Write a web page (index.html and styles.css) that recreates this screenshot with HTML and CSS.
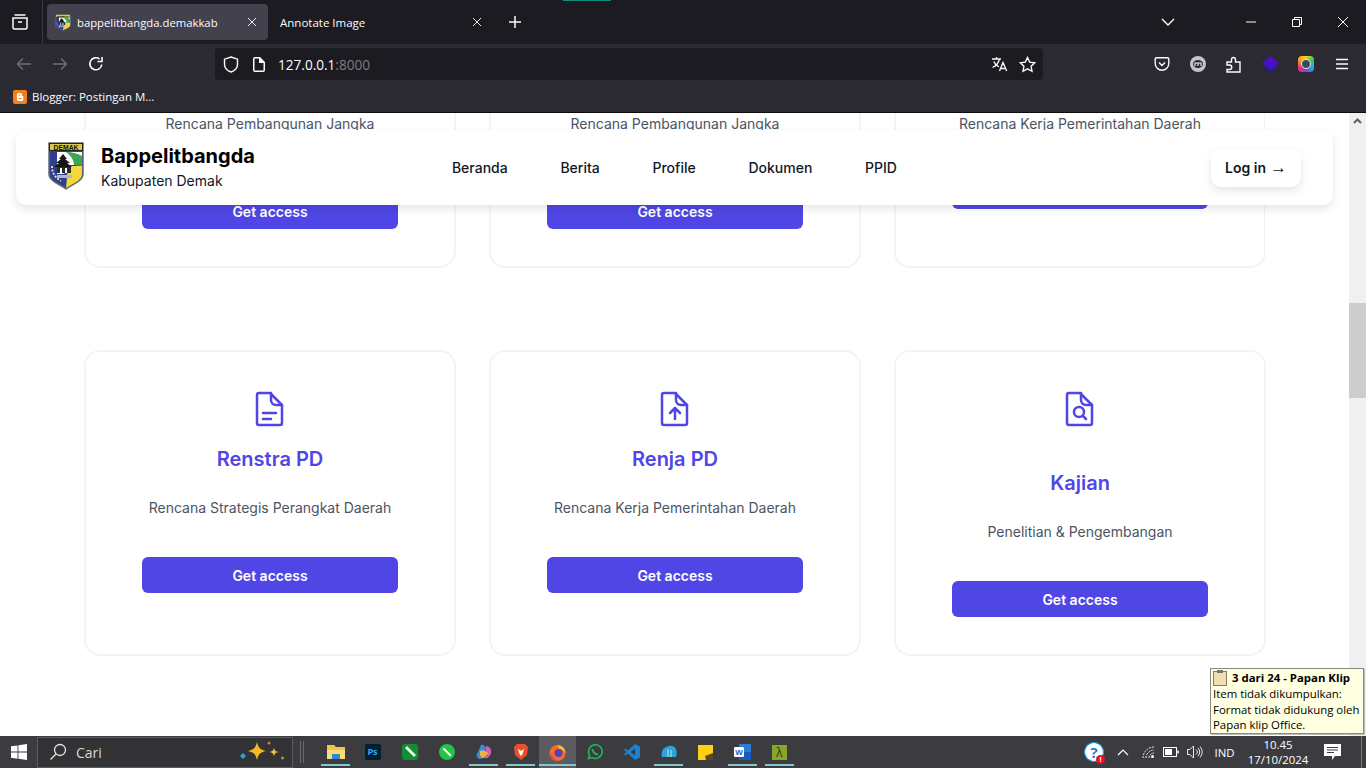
FILE: index.html
```html
<!DOCTYPE html>
<html lang="en">
<head>
    <meta charset="UTF-8">
    <meta name="viewport" content="width=device-width, initial-scale=1.0">
    <link rel="stylesheet" href="styles.css">
    <title>Bappelitbangda</title>
</head>
<body>
    <svg class="defs" width="0" height="0">
        <symbol id="shield" viewBox="0 0 36 48" preserveAspectRatio="none">
            <path d="M1 1h34v31c0 7-10 10-17 15C11 42 1 39 1 32z" fill="#2f3f8f" stroke="#6a6b72" stroke-width="1.500"/>
            <path d="M20 24h14v8c0 6-8 9-16 14z" fill="#f2d93a"/>
            <path d="M9 10h25v13H22c-1 6-4 8-7 9H9z" fill="#fff"/>
            <path d="M18 10c7 0 12 2 16 4v10c-3 0-5-1-8-1 0-5-3-9-8-13z" fill="#3aa651"/>
            <path d="M15 12l4 5h-2l5 4h-3l5 4H6l5-4H8l5-4h-2z" fill="#161616"/>
            <rect x="9" y="25" width="14" height="6" fill="#2a2a2a"/>
            <rect x="12" y="26" width="2" height="5" fill="#fff"/>
            <rect x="17" y="26" width="2" height="5" fill="#fff"/>
            <path d="M9 33h15v3H9z" fill="#b5b3d8"/>
            <path d="M4 24c0 6 2 11 9 15" fill="none" stroke="#dfe6c8" stroke-width="1.800" stroke-dasharray="2 1.500"/>
            <rect x="1.500" y="1.500" width="33" height="7" fill="#d9c84a" stroke="#222" stroke-width="1"/>
            <text x="18" y="7.600" text-anchor="middle" font-family="Liberation Sans" font-size="6.800" font-weight="700" fill="#111">DEMAK</text>
        </symbol>
    </svg>

    <div class="top-strip"></div>

    <div class="tabbar">
        <div class="tab-list-btn">
            <svg width="18" height="18" viewBox="0 0 18 18" fill="none" stroke="#fbfbfe" stroke-width="1.5"><path d="M3.500 2h11M2 5h14v9.500a1.500 1.500 0 0 1-1.500 1.500h-11A1.500 1.500 0 0 1 2 14.500zM7 9h4"/></svg>
        </div>
        <div class="tab tab-active">
            <svg class="favicon" width="16" height="17"><use href="#shield" width="16" height="17"/></svg>
            <span class="tab-title">bappelitbangda.demakkab</span>
            <svg class="tab-close" width="12" height="12" viewBox="0 0 12 12" stroke="#e8e8ea" stroke-width="1"><path d="M2 2l8 8M10 2l-8 8"/></svg>
        </div>
        <div class="tab">
            <span class="tab-title">Annotate Image</span>
            <svg class="tab-close" width="12" height="12" viewBox="0 0 12 12" stroke="#e8e8ea" stroke-width="1"><path d="M2 2l8 8M10 2l-8 8"/></svg>
        </div>
        <div class="new-tab">
            <svg width="14" height="14" viewBox="0 0 14 14" stroke="#fbfbfe" stroke-width="1.500"><path d="M7 1v12M1 7h12"/></svg>
        </div>
        <div class="tab-chevron">
            <svg width="14" height="9" viewBox="0 0 14 9" fill="none" stroke="#fbfbfe" stroke-width="1.400"><path d="M1 1l6 6 6-6"/></svg>
        </div>
        <div class="win-btn"><svg width="12" height="2" viewBox="0 0 12 2" stroke="#fff"><path d="M1 1h10"/></svg></div>
        <div class="win-btn"><svg width="12" height="12" viewBox="0 0 12 12" fill="none" stroke="#fff"><path d="M1.500 3.500h7v7h-7zM3.500 3.500v-2h7v7h-2"/></svg></div>
        <div class="win-btn"><svg width="12" height="12" viewBox="0 0 12 12" stroke="#fff"><path d="M1 1l10 10M11 1L1 11"/></svg></div>
    </div>

    <div class="toolbar">
        <div class="tool-btn"><svg width="16" height="14" viewBox="0 0 16 14" fill="none" stroke="#6f6e75" stroke-width="1.500"><path d="M15 7H1.500M7 1.500L1.500 7 7 12.500"/></svg></div>
        <div class="tool-btn"><svg width="16" height="14" viewBox="0 0 16 14" fill="none" stroke="#6f6e75" stroke-width="1.500"><path d="M1 7h13.500M9 1.500L14.500 7 9 12.500"/></svg></div>
        <div class="tool-btn"><svg width="16" height="16" viewBox="0 0 16 16" fill="none" stroke="#fbfbfe" stroke-width="1.600"><path d="M13.800 8.500A6 6 0 1 1 11.500 3M14 1v4.500H9.500"/></svg></div>
        <div class="urlbar">
            <svg class="url-shield" width="16" height="17" viewBox="0 0 16 17" fill="none" stroke="#fbfbfe" stroke-width="1.400"><path d="M8 1l6.500 2.200v5c0 4-3 6.600-6.500 7.800-3.500-1.200-6.500-3.800-6.500-7.800v-5z"/></svg>
            <svg class="url-page" width="12" height="15" viewBox="0 0 12 15" fill="#fbfbfe"><path d="M2 0h5l5 5v8a2 2 0 0 1-2 2H2a2 2 0 0 1-2-2V2a2 2 0 0 1 2-2zm0 1.500a.5.5 0 0 0-.5.5v11a.5.5 0 0 0 .5.5h8a.5.5 0 0 0 .5-.5V6H6V1.500z"/></svg>
            <span class="url-text">127.0.0.1<span class="url-port">:8000</span></span>
            <svg class="url-translate" width="17" height="16" viewBox="0 0 17 16" fill="none" stroke="#fbfbfe" stroke-width="1.300"><path d="M1 3h9M5.500 1v2M8.500 3C7.500 7 5 10 1.500 11.500M2.800 5.500c1 2.500 3 4.500 5.200 5.500M8.500 15l3.500-8.500L15.700 15M9.700 12.500h4.800"/></svg>
            <svg class="url-star" width="17" height="17" viewBox="0 0 17 17" fill="none" stroke="#fbfbfe" stroke-width="1.400"><path d="M8.500 1.500l2.200 4.600 5 .7-3.600 3.500.9 5-4.500-2.400L4 15.300l.9-5L1.300 6.800l5-.7z"/></svg>
        </div>
        <div class="tool-btn tool-first"><svg width="16" height="16" viewBox="0 0 16 16" fill="none" stroke="#fbfbfe" stroke-width="1.400"><path d="M2.500 1.700h11a1.300 1.300 0 0 1 1.300 1.300v4.500a6.800 6.800 0 0 1-13.600 0V3a1.300 1.300 0 0 1 1.300-1.300zM5 6.500l3 3 3-3"/></svg></div>
        <div class="tool-btn"><svg width="16" height="16" viewBox="0 0 16 16"><circle cx="8" cy="8" r="8" fill="#c4c4c6"/><ellipse cx="8" cy="8" rx="5" ry="4" fill="#2a2a2e"/><path d="M5 10V7h6v3M8 7v3" fill="none" stroke="#eee" stroke-width="1.200"/></svg></div>
        <div class="tool-btn"><svg width="16" height="17" viewBox="0 0 16 17" fill="none" stroke="#fbfbfe" stroke-width="1.400"><path d="M1 9V6h4.500V3.500a2 2 0 0 1 4 0V6H14v10H1v-2.500h2.500a2 2 0 0 0 0-4.500z"/></svg></div>
        <div class="tool-btn"><svg width="17" height="17" viewBox="0 0 17 17"><path d="M0 9.500L8.500 17 17 9.500l-8.500-4z" fill="#2e1a8a"/><path d="M0 7l8.500-7L17 7l-8.500 6z" fill="#4a10c4"/></svg></div>
        <div class="tool-btn"><div class="color-ring"><div class="color-eye"></div></div></div>
        <div class="tool-btn"><svg width="14" height="12" viewBox="0 0 14 12" stroke="#fbfbfe" stroke-width="1.400"><path d="M1 1.500h12M1 6h12M1 10.500h12"/></svg></div>
    </div>

    <div class="bookmarks">
        <svg width="14" height="14" viewBox="0 0 14 14"><rect width="14" height="14" rx="2" fill="#f48120"/><path d="M4 4.500A1.500 1.500 0 0 1 5.500 3h2A1.500 1.500 0 0 1 9 4.500V6h.5a.8.8 0 0 1 .8.8v2.700A1.500 1.500 0 0 1 8.800 11H5.500A1.500 1.500 0 0 1 4 9.500z" fill="#fff"/><path d="M5.500 5H7.500M5.500 8.500h3.300" stroke="#f48120" stroke-width="1.100"/></svg>
        <span class="bookmark-name">Blogger: Postingan M...</span>
    </div>

    <div class="page">
        <main class="content">
            <div class="cards-clip">
                <div class="cards">
                    <div class="card">
                        <svg class="card-icon" width="30" height="36"></svg>
                        <h3 class="card-title">RPJPD</h3>
                        <p class="card-text">Rencana Pembangunan Jangka Panjang Daerah</p>
                        <a class="btn">Get access</a>
                    </div>
                    <div class="card">
                        <svg class="card-icon" width="30" height="36"></svg>
                        <h3 class="card-title">RPJMD</h3>
                        <p class="card-text">Rencana Pembangunan Jangka Menengah Daerah</p>
                        <a class="btn">Get access</a>
                    </div>
                    <div class="card">
                        <svg class="card-icon" width="30" height="36"></svg>
                        <h3 class="card-title">RKPD</h3>
                        <p class="card-text">Rencana Kerja Pemerintahan Daerah</p>
                        <a class="btn">Get access</a>
                    </div>
                </div>
            </div>

            <div class="cards cards-second">
                <div class="card">
                    <svg class="card-icon" width="30" height="36" viewBox="0 0 30 36" fill="none" stroke="#4f46e5" stroke-width="2.500" stroke-linecap="round" stroke-linejoin="round"><path d="M4 2h11l12 12v18a2 2 0 0 1-2 2H4a2 2 0 0 1-2-2V4a2 2 0 0 1 2-2z"/><path d="M16 2v7a5 5 0 0 0 5 5h6"/><path d="M8 22h13M8 28h8"/></svg>
                    <h3 class="card-title">Renstra PD</h3>
                    <p class="card-text">Rencana Strategis Perangkat Daerah</p>
                    <a class="btn">Get access</a>
                </div>
                <div class="card">
                    <svg class="card-icon" width="30" height="36" viewBox="0 0 30 36" fill="none" stroke="#4f46e5" stroke-width="2.500" stroke-linecap="round" stroke-linejoin="round"><path d="M4 2h11l12 12v18a2 2 0 0 1-2 2H4a2 2 0 0 1-2-2V4a2 2 0 0 1 2-2z"/><path d="M16 2v7a5 5 0 0 0 5 5h6"/><path d="M15 28V17M10 22l5-5 5 5"/></svg>
                    <h3 class="card-title">Renja PD</h3>
                    <p class="card-text">Rencana Kerja Pemerintahan Daerah</p>
                    <a class="btn">Get access</a>
                </div>
                <div class="card">
                    <svg class="card-icon" width="30" height="36" viewBox="0 0 30 36" fill="none" stroke="#4f46e5" stroke-width="2.500" stroke-linecap="round" stroke-linejoin="round"><path d="M4 2h11l12 12v18a2 2 0 0 1-2 2H4a2 2 0 0 1-2-2V4a2 2 0 0 1 2-2z"/><path d="M16 2v7a5 5 0 0 0 5 5h6"/><circle cx="14" cy="21" r="5"/><path d="M18 25l3 3"/></svg>
                    <h3 class="card-title card-title-low">Kajian</h3>
                    <p class="card-text">Penelitian &amp; Pengembangan</p>
                    <a class="btn">Get access</a>
                </div>
            </div>
        </main>

        <div class="scrollbar">
            <svg class="scroll-up" width="9" height="6" viewBox="0 0 9 6" fill="none" stroke="#5f5f5f" stroke-width="2"><path d="M1 5l3.500-3.500L8 5"/></svg>
            <div class="scroll-thumb"></div>
        </div>

        <header class="site-header">
            <div class="brand">
                <svg class="brand-logo" width="36" height="48"><use href="#shield" width="36" height="48"/></svg>
                <div>
                    <div class="brand-name">Bappelitbangda</div>
                    <div class="brand-sub">Kabupaten Demak</div>
                </div>
            </div>
            <nav class="nav">
                <a>Beranda</a>
                <a>Berita</a>
                <a>Profile</a>
                <a>Dokumen</a>
                <a>PPID</a>
            </nav>
            <a class="login">Log in <span class="login-arrow">→</span></a>
        </header>

        <div class="clip-tip">
            <div class="clip-head">
                <svg width="14" height="16" viewBox="0 0 14 16"><rect x=".5" y="1.500" width="13" height="14" fill="#f3deb4" stroke="#8a7a5a"/><rect x="4" y="0" width="6" height="3" fill="#777"/></svg>
                <b>3 dari 24 - Papan Klip</b>
            </div>
            <div>Item tidak dikumpulkan:</div>
            <div>Format tidak didukung oleh</div>
            <div>Papan klip Office.</div>
        </div>
    </div>

    <div class="taskbar">
        <div class="start">
            <svg width="16" height="16" viewBox="0 0 16 16" fill="#fff"><path d="M0 2.300l6.500-.9v6.200H0zM7.400 1.300L16 0v7.600H7.400zM0 8.500h6.500v6.200L0 13.700zM7.400 8.500H16V16l-8.600-1.200z"/></svg>
        </div>
        <div class="search">
            <svg width="18" height="18" viewBox="0 0 18 18" fill="none" stroke="#e8e8e8" stroke-width="1.300"><circle cx="11" cy="7" r="5.500"/><path d="M7 11l-5.500 5.500"/></svg>
            <span class="search-text">Cari</span>
            <svg class="sparkles" width="46" height="24" viewBox="0 0 46 24"><path d="M18 2c1.500 6 3 7.500 9 9-6 1.500-7.500 3-9 9-1.500-6-3-7.500-9-9 6-1.500 7.500-3 9-9z" fill="#f5b81f"/><path d="M35 7.500c.6 3 1.400 3.900 4.500 4.500-3.100.6-3.900 1.500-4.500 4.500-.6-3-1.400-3.900-4.500-4.500 3.100-.6 3.900-1.500 4.500-4.500z" fill="#f0c23a"/><path d="M4 13l3 3-3 3-3-3z" fill="#2fa3d8"/><circle cx="30" cy="3" r="1.500" fill="#d9793a"/><circle cx="43.500" cy="18" r="1.500" fill="#7fb23a"/></svg>
        </div>
        <div class="task-sep"></div>

        <div class="task-icon running"><svg width="18" height="16" viewBox="0 0 18 16"><path d="M0 1h7l2 2h9v12H0z" fill="#f4c542"/><rect y="6" width="18" height="9" fill="#f9dc7c"/><rect x="5" y="10" width="8" height="5" fill="#2e8bc9"/></svg></div>
        <div class="task-icon"><div class="ps-icon">Ps</div></div>
        <div class="task-icon"><svg width="16" height="16" viewBox="0 0 16 16"><rect width="16" height="16" rx="3" fill="#0f8f2f"/><path d="M3 4l9 9 2-2-9-9z" fill="#e6ffe6"/></svg></div>
        <div class="task-icon"><svg width="16" height="16" viewBox="0 0 16 16"><circle cx="8" cy="8" r="8" fill="#20c63f"/><path d="M3.500 5l7.500 7.500 1.600-1.600L5 3.500z" fill="#eaffea"/></svg></div>
        <div class="task-icon running"><svg width="16" height="16" viewBox="0 0 16 16"><path d="M5 1c3-1 4 1 5 4l-3 9c-2 2-5 1-6-1s0-3 1-5z" fill="#3d8be0"/><path d="M10 2c3 0 6 3 5 7s-4 6-7 5c3-2 3-5 2-8z" fill="#d85fc0"/><path d="M4 7c3-1 7 0 8 2l-4 5c-2 0-3-1-4-3z" fill="#f2b33d"/></svg></div>
        <div class="task-icon running"><svg width="14" height="16" viewBox="0 0 14 16"><path d="M3 0h8l3 3-1 8-6 5-6-5-1-8z" fill="#e8502a"/><path d="M4 5l3 2 3-2-1.500 5L7 12l-1.500-2z" fill="#fff"/></svg></div>
        <div class="task-icon task-active running"><svg width="17" height="17" viewBox="0 0 17 17"><circle cx="8.500" cy="9" r="8" fill="#f36d2b"/><path d="M8.500 1c5 1 8 4 8 8-2-3-4-4-6-4z" fill="#fbc02d"/><circle cx="9.500" cy="9" r="4" fill="#5a3fb8"/><path d="M1 10c1 4 4 7 8 7-3-1-5-3-6-6z" fill="#e63a66"/></svg></div>
        <div class="task-icon"><svg width="16" height="16" viewBox="0 0 16 16" fill="none" stroke="#25b45a" stroke-width="1.600"><path d="M1.500 14.500l1-3.500A6.800 6.800 0 1 1 5 13.500z"/><path d="M5.500 5c0 3 2.500 5.500 5.500 5.500" stroke-width="2"/></svg></div>
        <div class="task-icon"><svg width="16" height="16" viewBox="0 0 16 16"><path d="M11 0l5 2.500v11L11 16 4 9.500 1.500 11.500 0 10.500 2.500 8 0 5.500 1.500 4.500 4 6.500z" fill="#1a82d2"/><path d="M11 4.500L6.500 8l4.500 3.500z" fill="#3c3c40"/></svg></div>
        <div class="task-icon running"><svg width="16" height="16" viewBox="0 0 16 16"><path d="M1 13c-1-4 0-8 4-10s8-2 10 2c1 3 1 6 0 8z" fill="#29a3d9"/><path d="M7 5v8M10 6v7" stroke="#bfe6f7" stroke-width="1"/></svg></div>
        <div class="task-icon"><svg width="15" height="15" viewBox="0 0 15 15"><rect width="15" height="15" fill="#fcd116"/><path d="M15 8v7H8l-1-4z" fill="#5a4a1a"/></svg></div>
        <div class="task-icon running"><svg width="17" height="16" viewBox="0 0 17 16"><rect x="5" width="12" height="16" rx="1" fill="#2b7cd3"/><rect x="5" y="8" width="12" height="8" fill="#185abd"/><rect y="3" width="10" height="10" rx="1" fill="#fff"/><text x="5" y="11" text-anchor="middle" font-family="Liberation Sans" font-size="8" font-weight="700" fill="#185abd">W</text></svg></div>
        <div class="task-icon running"><div class="lambda-icon">λ</div></div>

        <div class="tray">
            <div class="tray-help">?<span class="help-badge">!</span></div>
            <div class="tray-chevron"><svg width="12" height="8" viewBox="0 0 12 8" fill="none" stroke="#fff" stroke-width="1.200"><path d="M1 7l5-5 5 5"/></svg></div>
            <div class="tray-wifi"><svg width="13" height="13" viewBox="0 0 13 13" fill="none" stroke="#e8e8e8"><path d="M1 12A11 11 0 0 1 12 1M4 12a8 8 0 0 1 8-8M7 12a5 5 0 0 1 5-5" stroke-dasharray="2 1"/><circle cx="10.500" cy="10.500" r="1.500" fill="#fff" stroke="none"/></svg></div>
            <div class="tray-battery"><svg width="16" height="10" viewBox="0 0 16 10" fill="none" stroke="#fff"><rect x=".5" y=".5" width="13" height="9"/><rect x="2" y="2" width="7" height="6" fill="#fff" stroke="none"/><path d="M15 3.500v3" stroke-width="1.500"/></svg></div>
            <div class="tray-speaker"><svg width="16" height="14" viewBox="0 0 16 14" fill="none" stroke="#e8e8e8"><path d="M.5 4.500h2.500L6.500 1v12L3 9.500H.5zM9 4.500a3 3 0 0 1 0 5M11 3a5.500 5.500 0 0 1 0 8M13 1.500a8 8 0 0 1 0 11"/></svg></div>
            <div class="tray-lang">IND</div>
            <div class="tray-clock">
                <div>10.45</div>
                <div>17/10/2024</div>
            </div>
            <div class="tray-notif"><svg width="17" height="16" viewBox="0 0 17 16"><path d="M0 0h17v12h-6l-3 4v-4H0z" fill="#fff"/><path d="M3 3.500h11M3 6h11M3 8.500h7" stroke="#3c3c40"/></svg></div>
            <div class="tray-end"></div>
        </div>
    </div>
</body>
</html>
```

FILE: styles.css
```css
* {
    box-sizing: border-box;
}

html, body {
    height: 100%;
}

body {
    margin: 0;
    display: flex;
    flex-direction: column;
    overflow: hidden;
    font-family: 'Inter', sans-serif;
    background-color: #fff;
}

.defs {
    position: absolute;
}

.top-strip {
    position: absolute;
    top: 0;
    left: 563px;
    width: 48px;
    height: 1px;
    background-color: #12897d;
}

/* browser chrome */
.tabbar {
    height: 44px;
    flex: none;
    display: flex;
    align-items: center;
    background-color: #1c1b22;
    color: #fbfbfe;
    font-family: 'Open Sans', sans-serif;
    font-size: 11.500px;
}

.tab-list-btn {
    width: 43px;
    height: 44px;
    border-right: 1px solid #3a3a42;
    display: flex;
    align-items: center;
    justify-content: center;
    padding-right: 3px;
}

.tab {
    width: 221px;
    height: 36px;
    padding: 0 6px 0 12px;
    display: flex;
    align-items: center;
    border-radius: 4px;
}

.tab-active {
    margin-left: 4px;
    padding: 0 10px 0 8px;
    background-color: #42414d;
}

.tab-active .tab-title {
    font-size: 11.300px;
}

.favicon {
    margin-right: 6px;
}

.tab-close {
    margin-left: auto;
}

.new-tab {
    width: 22px;
    margin-left: 15px;
    display: flex;
    justify-content: center;
}

.tab-chevron {
    margin-left: auto;
    margin-right: 53px;
    display: flex;
}

.win-btn {
    width: 46px;
    height: 44px;
    display: flex;
    align-items: center;
    justify-content: center;
}

.toolbar {
    height: 40px;
    flex: none;
    display: flex;
    align-items: center;
    padding: 0 6px;
    background-color: #2b2a33;
}

.tool-btn {
    width: 36px;
    height: 32px;
    display: flex;
    align-items: center;
    justify-content: center;
}

.tool-first {
    margin-left: auto;
}

.urlbar {
    width: 828px;
    height: 32px;
    margin-left: 101px;
    display: flex;
    align-items: center;
    padding: 0 7px 0 8px;
    border-radius: 4px;
    background-color: #1c1b22;
    color: #fbfbfe;
    font-family: 'Open Sans', sans-serif;
    font-size: 13.600px;
}

.url-page {
    margin-left: 14px;
}

.url-text {
    margin-left: 13px;
}

.url-port {
    color: #7c7b82;
}

.url-translate {
    margin-left: auto;
}

.url-star {
    margin-left: 11px;
}

.color-ring {
    width: 16px;
    height: 16px;
    border-radius: 4px;
    background: conic-gradient(#f5d020, #35c46a, #2aa5e0, #8a3fd0, #e8327a, #f5a020, #f5d020);
    display: flex;
    align-items: center;
    justify-content: center;
}

.color-eye {
    width: 10px;
    height: 10px;
    border-radius: 50%;
    background-color: #3a4a5a;
    border: 1.500px solid #e8e8ee;
}

.bookmarks {
    height: 29px;
    flex: none;
    display: flex;
    align-items: center;
    padding: 0 0 3px 13px;
    background-color: #2b2a33;
    border-bottom: 1px solid #0c0c0d;
    color: #fbfbfe;
    font-family: 'Open Sans', sans-serif;
    font-size: 11.500px;
}

.bookmark-name {
    margin-left: 5px;
}

/* page */
.page {
    flex: 1;
    min-height: 0;
    position: relative;
    display: flex;
    background-color: #fff;
}

.content {
    flex: 1;
    min-width: 0;
    padding: 0 84px;
}

.cards-clip {
    height: 155px;
    overflow: hidden;
    display: flex;
    flex-direction: column;
    justify-content: flex-end;
}

.cards {
    flex: none;
    display: flex;
    gap: 33px;
}

.cards-second {
    margin-top: 82px;
}

.card {
    flex: 1;
    display: flex;
    flex-direction: column;
    align-items: center;
    padding: 39px 56px 37px;
    text-align: center;
    background-color: #fff;
    border: 2px solid #f3f4f6;
    border-radius: 16px;
}

.card-icon {
    flex: none;
}

.card-title {
    margin: 18px 0 0;
    font-size: 20px;
    line-height: 28px;
    font-weight: 600;
    color: #4f46e5;
}

.card-title-low {
    margin-top: 42px;
}

.card-text {
    margin: 25px 0 39px;
    font-size: 14px;
    line-height: 20px;
    color: #4b5563;
}

.btn {
    width: 256px;
    height: 36px;
    flex: none;
    padding-top: 1px;
    display: flex;
    align-items: center;
    justify-content: center;
    border-radius: 6px;
    background-color: #4f46e5;
    color: #fff;
    font-size: 14px;
    font-weight: 600;
}

.scrollbar {
    width: 17px;
    flex: none;
    display: flex;
    flex-direction: column;
    align-items: center;
    background-color: #f0f0f0;
}

.scroll-up {
    flex: none;
    margin-top: 5px;
}

.scroll-thumb {
    flex: none;
    width: 17px;
    height: 95px;
    margin-top: 179px;
    background-color: #cdcdcd;
}

.site-header {
    position: absolute;
    top: 17px;
    left: 16px;
    width: 1317px;
    height: 75px;
    display: flex;
    align-items: center;
    padding: 0 32px;
    background-color: #fff;
    border-radius: 10px;
    box-shadow: 0 4px 10px rgba(0, 0, 0, 0.1);
}

.brand {
    display: flex;
    align-items: center;
    gap: 17px;
    margin-top: -3px;
}

.brand-name {
    font-size: 20px;
    line-height: 28px;
    font-weight: 700;
    color: #000;
}

.brand-sub {
    margin-top: 1px;
    font-size: 14px;
    line-height: 20px;
    color: #111827;
}

.nav {
    display: flex;
    gap: 52.750px;
    margin-left: 197px;
    font-size: 14px;
    font-weight: 500;
    color: #111827;
}

.login {
    width: 90px;
    height: 38px;
    margin-left: auto;
    display: flex;
    align-items: center;
    justify-content: center;
    border-radius: 10px;
    background-color: #fff;
    box-shadow: 0 4px 10px rgba(0, 0, 0, 0.1);
    color: #111827;
    font-size: 14px;
    font-weight: 600;
}

.login-arrow {
    margin-left: 4px;
    font-family: 'Liberation Sans', sans-serif;
    font-size: 17px;
    line-height: 1;
    font-weight: 400;
}

.clip-tip {
    position: absolute;
    right: 2px;
    bottom: 2px;
    width: 154px;
    height: 66px;
    padding: 0 2px;
    background-color: #ffffe1;
    border: 1px solid #8a8a80;
    box-shadow: 1px 1px 0 #bbb;
    color: #000;
    font-family: 'Open Sans', sans-serif;
    font-size: 11.400px;
    line-height: 15.500px;
    white-space: nowrap;
}

.clip-head {
    display: flex;
    align-items: center;
    gap: 5px;
    height: 17px;
}

/* windows taskbar */
.taskbar {
    height: 32px;
    flex: none;
    display: flex;
    align-items: center;
    background-color: #3c3c40;
    color: #fff;
    font-family: 'Open Sans', sans-serif;
    font-size: 11.400px;
}

.start {
    width: 37px;
    height: 32px;
    display: flex;
    align-items: center;
    justify-content: center;
}

.search {
    width: 256px;
    height: 31px;
    display: flex;
    align-items: center;
    padding: 0 7px 0 11px;
    background-color: #333336;
    border: 1px solid #5c5c60;
    color: #d8d8d8;
    font-size: 14px;
}

.search-text {
    margin-left: 9px;
}

.sparkles {
    margin-left: auto;
}

.task-sep {
    width: 24px;
    height: 22px;
    background: linear-gradient(to right, transparent 7px, #6a6a6e 7px, #6a6a6e 8px, transparent 8px, transparent 10px, #6a6a6e 10px, #6a6a6e 11px, transparent 11px);
}

.task-icon {
    width: 37px;
    height: 32px;
    flex: none;
    position: relative;
    display: flex;
    align-items: center;
    justify-content: center;
}

.running::after {
    content: '';
    position: absolute;
    left: 4px;
    right: 4px;
    bottom: 2px;
    height: 2px;
    background-color: #7fc8cf;
}

.task-active {
    background-color: #5c5c60;
}

.task-active::after {
    left: 0;
    right: 0;
}

.ps-icon {
    width: 16px;
    height: 16px;
    border-radius: 2px;
    background-color: #001e36;
    color: #31a8ff;
    font-size: 9px;
    font-weight: 700;
    line-height: 16px;
    text-align: center;
}

.lambda-icon {
    width: 15px;
    height: 15px;
    background-color: #86a82a;
    color: #2a3a08;
    font-size: 12px;
    line-height: 15px;
    text-align: center;
}

.tray {
    margin-left: auto;
    display: flex;
    align-items: center;
    height: 32px;
}

.tray > div {
    display: flex;
    align-items: center;
    justify-content: center;
}

.tray-help {
    width: 26px;
    height: 20px;
    position: relative;
    background: radial-gradient(circle, #fff 0, #fff 60%, #1f8fd8 64%, #1f8fd8 70%, transparent 72%);
    background-size: 20px 20px;
    background-repeat: no-repeat;
    background-position: center;
    color: #1f7fc8;
    font-size: 15px;
    font-weight: 700;
}

.help-badge {
    position: absolute;
    right: 2px;
    bottom: -2px;
    width: 9px;
    height: 9px;
    border-radius: 50%;
    background-color: #e81123;
    color: #fff;
    font-size: 7px;
    line-height: 9px;
    text-align: center;
}

.tray-chevron {
    width: 32px;
}

.tray-wifi {
    width: 18px;
}

.tray-battery {
    width: 28px;
}

.tray-speaker {
    width: 20px;
}

.tray-lang {
    width: 39px;
}

.tray .tray-clock {
    width: 68px;
    flex-direction: column;
    line-height: 15px;
}

.tray-notif {
    width: 40px;
}

.tray-end {
    width: 14px;
    height: 32px;
    background: linear-gradient(to right, transparent 9px, #77777b 9px, #77777b 10px, transparent 10px);
}
```
